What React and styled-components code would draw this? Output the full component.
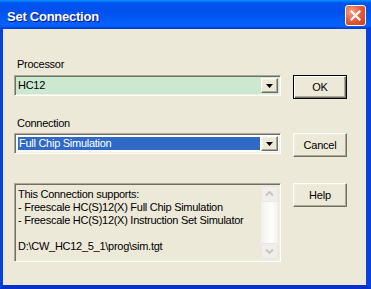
import React from "react";
import styled, { createGlobalStyle, css } from "styled-components";

const Global = createGlobalStyle`
  html, body { margin: 0; padding: 0; background: #fff; }
  body { font-family: "Liberation Sans", Arial, sans-serif; }
`;

const Window = styled.div`
  width: 371px;
  height: 289px;
  box-sizing: border-box;
  display: flex;
  flex-direction: column;
  background: #0831d9;
  border-left: 3px solid #0841dc;
  border-right: 5px solid #0841dc;
  border-bottom: 4px solid #0831c9;
  box-shadow: inset 0 -1px #001ea0;
`;

const TitleBar = styled.div`
  height: 29px;
  box-sizing: border-box;
  margin: 0 -5px 0 -3px;
  flex: none;
  display: flex;
  align-items: center;
  justify-content: space-between;
  padding: 1px 5px 0 7px;
  background: linear-gradient(
    180deg,
    #0997ff 0%,
    #0053ee 10%,
    #0050ee 40%,
    #0062fa 85%,
    #0062fa 90%,
    #0058f0 93%,
    #003dd7 96%,
    #003dd7 100%
  );
`;

const Title = styled.span`
  color: #fff;
  font-weight: bold;
  font-size: 13px;
  letter-spacing: -0.25px;
  padding-top: 2px;
  text-shadow: 1px 1px #0f1089;
`;

const CloseBtn = styled.div`
  width: 21px;
  height: 21px;
  box-sizing: border-box;
  border: 1px solid #fff;
  border-radius: 3px;
  background: radial-gradient(circle at 30% 30%, #f4a486 0%, #e5603f 45%, #cc3c1c 100%);
  display: flex;
  align-items: center;
  justify-content: center;
`;

const Client = styled.div`
  flex: 1;
  background: #ece9d8;
  display: grid;
  grid-template-columns: 267px 54px;
  grid-template-rows: 18px 41px 17px 50px auto;
  column-gap: 12px;
  padding: 28px 0 0 11px;
  align-items: start;
`;

const Label = styled.div`
  grid-column: 1;
  font-size: 11px;
  line-height: 13px;
  letter-spacing: -0.27px;
  color: #000;
  padding: 1px 0 0 3px;
`;

const raised = css`
  border: 1px solid;
  border-color: #fff #716f64 #716f64 #fff;
  box-shadow: inset -1px -1px #aca899, inset 1px 1px #f1efe2;
`;

const sunken = css`
  border: 1px solid;
  border-color: #aca899 #fff #fff #aca899;
  box-shadow: inset 1px 1px #716f64, inset -1px -1px #f1efe2;
`;

const Combo = styled.div`
  grid-column: 1;
  height: 21px;
  box-sizing: border-box;
  ${sunken};
  padding: 2px;
  display: flex;
  align-items: stretch;
  background: ${(p) => (p.$bg ? p.$bg : "#fff")};
`;

const ComboText = styled.div`
  flex: 1;
  font-size: 11px;
  letter-spacing: -0.27px;
  line-height: 15px;
  padding-left: 1px;
  margin-right: 1px;
  color: ${(p) => (p.$selected ? "#fff" : "#000")};
  background: ${(p) => (p.$selected ? "#316ac5" : "transparent")};
  ${(p) => p.$selected && css`margin: 1px 1px 1px 1px; line-height: 13px; padding-left: 1px;`}
`;

const DropBtn = styled.div`
  width: 17px;
  box-sizing: border-box;
  background: #ece9d8;
  ${raised};
  display: flex;
  align-items: center;
  justify-content: center;
`;

const Button = styled.div`
  grid-column: 2;
  height: 24px;
  box-sizing: border-box;
  display: flex;
  align-items: center;
  justify-content: center;
  font-size: 11px;
  letter-spacing: -0.2px;
  color: #000;
  background: #ece9d8;
  ${(p) =>
    p.$default
      ? css`
          border: 1px solid #000;
          box-shadow: inset 1px 1px #fff, inset -1px -1px #716f64, inset -2px -2px #aca899;
        `
      : raised};
`;

const InfoBox = styled.div`
  grid-column: 1;
  height: 79px;
  box-sizing: border-box;
  ${sunken};
  background: #ece9d8;
  display: flex;
  padding: 2px 2px 2px 2px;
`;

const InfoText = styled.div`
  flex: 1;
  font-size: 11px;
  line-height: 13px;
  letter-spacing: -0.27px;
  padding: 2px 0 0 1px;
  white-space: pre;
  overflow: hidden;
  color: #000;
`;

const ScrollBar = styled.div`
  width: 17px;
  display: flex;
  flex-direction: column;
  justify-content: space-between;
  background: linear-gradient(90deg, #f3f1ec 0%, #fefefe 60%, #f3f1ec 100%);
`;

const ScrollArrow = styled.div`
  height: 16px;
  box-sizing: border-box;
  border: 1px solid #e8e7e1;
  border-radius: 2px;
  background: #f0efe9;
  display: flex;
  align-items: center;
  justify-content: center;
`;

const Triangle = () => (
  <svg width="7" height="4" viewBox="0 0 7 4">
    <path d="M0 0H7L3.5 4Z" fill="#000" />
  </svg>
);

const Chevron = ({ down }) => (
  <svg width="9" height="6" viewBox="0 0 9 6">
    <path
      d={down ? "M1 1.5L4.5 5L8 1.5" : "M1 4.5L4.5 1L8 4.5"}
      fill="none"
      stroke="#c9c7ba"
      strokeWidth="2"
    />
  </svg>
);

export default function App() {
  return (
    <>
      <Global />
      <Window>
        <TitleBar>
          <Title>Set Connection</Title>
          <CloseBtn>
            <svg width="11" height="11" viewBox="0 0 11 11">
              <path d="M1.5 1.5L9.5 9.5M9.5 1.5L1.5 9.5" stroke="#fff" strokeWidth="2.2" strokeLinecap="square" />
            </svg>
          </CloseBtn>
        </TitleBar>
        <Client>
          <Label>Processor</Label>
          <div />
          <Combo $bg="#cce8cf">
            <ComboText>HC12</ComboText>
            <DropBtn>
              <Triangle />
            </DropBtn>
          </Combo>
          <Button $default>OK</Button>
          <Label>Connection</Label>
          <div />
          <Combo>
            <ComboText $selected>Full Chip Simulation</ComboText>
            <DropBtn>
              <Triangle />
            </DropBtn>
          </Combo>
          <Button>Cancel</Button>
          <InfoBox>
            <InfoText>
              {"This Connection supports:\n- Freescale HC(S)12(X) Full Chip Simulation\n- Freescale HC(S)12(X) Instruction Set Simulator\n\nD:\\CW_HC12_5_1\\prog\\sim.tgt"}
            </InfoText>
            <ScrollBar>
              <ScrollArrow>
                <Chevron />
              </ScrollArrow>
              <ScrollArrow>
                <Chevron down />
              </ScrollArrow>
            </ScrollBar>
          </InfoBox>
          <Button>Help</Button>
        </Client>
      </Window>
    </>
  );
}
